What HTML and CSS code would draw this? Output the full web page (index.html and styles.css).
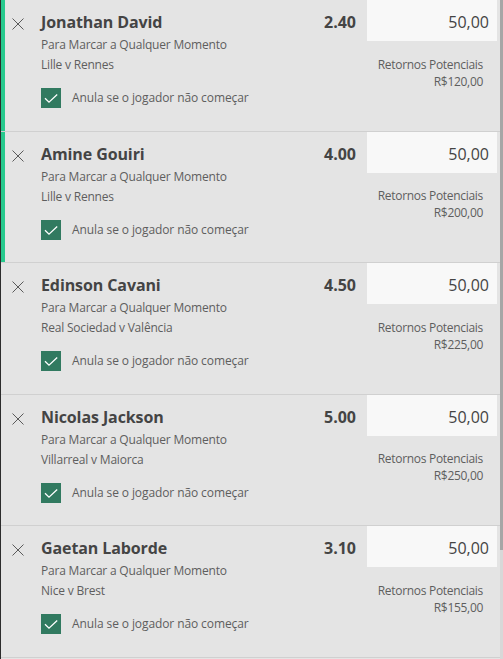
FILE: index.html
```html
<!DOCTYPE html>
<html lang="pt-BR">
<head>
<meta charset="utf-8">
<title>Boletim</title>
<link rel="stylesheet" href="styles.css">
</head>
<body>
<div class="slip">
  <div class="list">
    <div class="bet active">
      <div class="remove"><svg width="12" height="12" viewBox="0 0 12 12"><path d="M0.5 0.5 L11.5 11.5 M11.5 0.5 L0.5 11.5" /></svg></div>
      <div class="info">
        <div class="name">Jonathan David</div>
        <div class="market">Para Marcar a Qualquer Momento</div>
        <div class="match">Lille v Rennes</div>
        <div class="void"><span class="box"><svg width="20" height="20" viewBox="0 0 20 20"><path d="M4 10.2 L8 14.2 L16.2 6.6" /></svg></span><span class="void-label">Anula se o jogador não começar</span></div>
      </div>
      <div class="odds">2.40</div>
      <div class="stake-col">
        <div class="stake">50,00</div>
        <div class="returns">Retornos Potenciais<br>R$120,00</div>
      </div>
    </div>
    <div class="bet active">
      <div class="remove"><svg width="12" height="12" viewBox="0 0 12 12"><path d="M0.5 0.5 L11.5 11.5 M11.5 0.5 L0.5 11.5" /></svg></div>
      <div class="info">
        <div class="name">Amine Gouiri</div>
        <div class="market">Para Marcar a Qualquer Momento</div>
        <div class="match">Lille v Rennes</div>
        <div class="void"><span class="box"><svg width="20" height="20" viewBox="0 0 20 20"><path d="M4 10.2 L8 14.2 L16.2 6.6" /></svg></span><span class="void-label">Anula se o jogador não começar</span></div>
      </div>
      <div class="odds">4.00</div>
      <div class="stake-col">
        <div class="stake">50,00</div>
        <div class="returns">Retornos Potenciais<br>R$200,00</div>
      </div>
    </div>
    <div class="bet">
      <div class="remove"><svg width="12" height="12" viewBox="0 0 12 12"><path d="M0.5 0.5 L11.5 11.5 M11.5 0.5 L0.5 11.5" /></svg></div>
      <div class="info">
        <div class="name">Edinson Cavani</div>
        <div class="market">Para Marcar a Qualquer Momento</div>
        <div class="match">Real Sociedad v Valência</div>
        <div class="void"><span class="box"><svg width="20" height="20" viewBox="0 0 20 20"><path d="M4 10.2 L8 14.2 L16.2 6.6" /></svg></span><span class="void-label">Anula se o jogador não começar</span></div>
      </div>
      <div class="odds">4.50</div>
      <div class="stake-col">
        <div class="stake">50,00</div>
        <div class="returns">Retornos Potenciais<br>R$225,00</div>
      </div>
    </div>
    <div class="bet">
      <div class="remove"><svg width="12" height="12" viewBox="0 0 12 12"><path d="M0.5 0.5 L11.5 11.5 M11.5 0.5 L0.5 11.5" /></svg></div>
      <div class="info">
        <div class="name">Nicolas Jackson</div>
        <div class="market">Para Marcar a Qualquer Momento</div>
        <div class="match">Villarreal v Maiorca</div>
        <div class="void"><span class="box"><svg width="20" height="20" viewBox="0 0 20 20"><path d="M4 10.2 L8 14.2 L16.2 6.6" /></svg></span><span class="void-label">Anula se o jogador não começar</span></div>
      </div>
      <div class="odds">5.00</div>
      <div class="stake-col">
        <div class="stake">50,00</div>
        <div class="returns">Retornos Potenciais<br>R$250,00</div>
      </div>
    </div>
    <div class="bet">
      <div class="remove"><svg width="12" height="12" viewBox="0 0 12 12"><path d="M0.5 0.5 L11.5 11.5 M11.5 0.5 L0.5 11.5" /></svg></div>
      <div class="info">
        <div class="name">Gaetan Laborde</div>
        <div class="market">Para Marcar a Qualquer Momento</div>
        <div class="match">Nice v Brest</div>
        <div class="void"><span class="box"><svg width="20" height="20" viewBox="0 0 20 20"><path d="M4 10.2 L8 14.2 L16.2 6.6" /></svg></span><span class="void-label">Anula se o jogador não começar</span></div>
      </div>
      <div class="odds">3.10</div>
      <div class="stake-col">
        <div class="stake">50,00</div>
        <div class="returns">Retornos Potenciais<br>R$155,00</div>
      </div>
    </div>
  </div>
  <div class="scrollbar"><div class="thumb"></div></div>
</div>
</body>
</html>
```

FILE: styles.css
```css
* { box-sizing: border-box; }
html, body { margin: 0; padding: 0; }
body {
  background: #e4e4e4;
  font-family: "Open Sans", "Noto Sans", sans-serif;
  color: #444;
  width: 503px;
  height: 659px;
  overflow: hidden;
}
.slip {
  display: flex;
  height: 659px;
}
.list {
  flex: 1;
  border-left: 1px solid #2c2c2c;
  display: flex;
  flex-direction: column;
}
.bet {
  display: grid;
  grid-template-columns: 40px 1fr auto 130px;
  height: 131.5px;
  flex: none;
  padding-right: 3px;
  border-bottom: 1px solid #d0d0d0;
}
.bet.active {
  box-shadow: inset 4px 0 0 #27c98d;
}
.remove {
  padding: 18px 0 0 11px;
}
.remove svg {
  display: block;
}
.remove path {
  stroke: #5a5a5a;
  stroke-width: 1;
  fill: none;
}
.info {
  padding-top: 12px;
}
.name {
  font-size: 16px;
  font-weight: 700;
  line-height: 20px;
  margin-bottom: 3px;
  color: #444;
  letter-spacing: -0.1px;
}
.market, .match {
  font-size: 12px;
  line-height: 20px;
  color: #5e5e5e;
  letter-spacing: -0.2px;
}
.void {
  display: flex;
  align-items: center;
  margin-top: 13px;
}
.box {
  width: 20px;
  height: 20px;
  background: #317a60;
  display: block;
}
.box svg { display: block; }
.box path {
  stroke: #fff;
  stroke-width: 1.3;
  fill: none;
}
.void-label {
  margin-left: 11px;
  font-size: 12px;
  line-height: 20px;
  color: #5e5e5e;
  letter-spacing: -0.1px;
}
.odds {
  padding-top: 12px;
  margin-right: 11px;
  font-size: 16px;
  font-weight: 700;
  line-height: 20px;
  color: #444;
  text-align: right;
}
.stake {
  height: 41px;
  background: #f8f8f8;
  padding: 12px 8px 0 0;
  font-size: 16px;
  line-height: 20px;
  text-align: right;
  color: #444;
}
.returns {
  margin-top: 14.5px;
  padding-right: 14px;
  font-size: 12px;
  line-height: 17px;
  text-align: right;
  color: #5e5e5e;
  letter-spacing: -0.3px;
}
.scrollbar {
  width: 3px;
  background: #d8d8d8;
  display: flex;
  flex-direction: column;
}
.thumb {
  height: 550px;
  background: #a6a6a6;
}
```
